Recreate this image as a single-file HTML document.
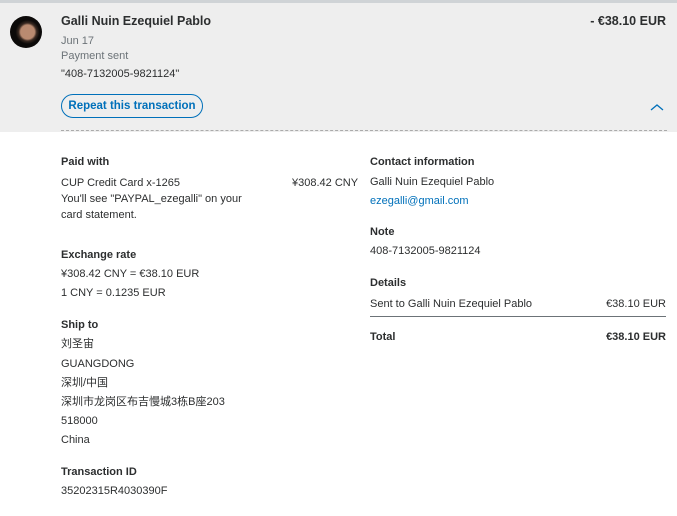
<!DOCTYPE html>
<html><head><meta charset="utf-8"><style>
*{margin:0;padding:0;box-sizing:border-box}
body{width:677px;height:516px;background:#fff;font-family:"Liberation Sans","Noto Sans CJK SC",sans-serif;color:#2c2e2f;font-size:11px;position:relative;overflow:hidden}
.hdr{position:absolute;left:0;top:0;width:677px;height:132px;background:#eeeeee;border-top:3px solid #cfd3d6}
.a{position:absolute;white-space:nowrap;line-height:14px}
.b{font-weight:bold}
.g{color:#6c7378}
.av{position:absolute;left:10px;top:16px;width:32px;height:32px;border-radius:50%;background:radial-gradient(circle at 55% 50%,#b98a70 0 7px,#3a2a22 9px,#0c0a09 12px)}
.btn{position:absolute;left:61px;top:94px;width:142px;height:24px;border:1px solid #0070ba;border-radius:12px;color:#0070ba;font-weight:bold;font-size:11.5px;line-height:22px;text-align:center}
.dot{position:absolute;left:61px;top:130px;width:606px;border-top:1px dashed #aaa}
</style></head><body>
<div class="hdr"></div>
<div class="av"></div>
<div class="a b" style="left:61px;top:14px;font-size:12.5px">Galli Nuin Ezequiel Pablo</div>
<div class="a g" style="left:61px;top:34px">Jun 17</div>
<div class="a g" style="left:61px;top:49px">Payment sent</div>
<div class="a" style="left:61px;top:67px">"408-7132005-9821124"</div>
<div class="btn">Repeat this transaction</div>
<div class="a b" style="right:11px;top:14px;font-size:12.5px">- €38.10 EUR</div>
<svg class="a" style="left:650px;top:104px" width="14" height="8"><path d="M1 6 L7 1 L13 6" stroke="#0070ba" stroke-width="1.3" fill="none"/></svg>
<div class="dot"></div>

<div class="a b" style="left:61px;top:155px">Paid with</div>
<div class="a" style="left:61px;top:176px">CUP Credit Card x-1265</div>
<div class="a" style="left:292px;top:176px">¥308.42 CNY</div>
<div class="a" style="left:61px;top:192px">You'll see "PAYPAL_ezegalli" on your</div>
<div class="a" style="left:61px;top:208px">card statement.</div>
<div class="a b" style="left:61px;top:248px">Exchange rate</div>
<div class="a" style="left:61px;top:267px">¥308.42 CNY = €38.10 EUR</div>
<div class="a" style="left:61px;top:286px">1 CNY = 0.1235 EUR</div>
<div class="a b" style="left:61px;top:318px">Ship to</div>
<div class="a" style="left:61px;top:337px">刘圣宙</div>
<div class="a" style="left:61px;top:357px">GUANGDONG</div>
<div class="a" style="left:61px;top:376px">深圳/中国</div>
<div class="a" style="left:61px;top:395px">深圳市龙岗区布吉慢城3栋B座203</div>
<div class="a" style="left:61px;top:414px">518000</div>
<div class="a" style="left:61px;top:433px">China</div>
<div class="a b" style="left:61px;top:465px">Transaction ID</div>
<div class="a" style="left:61px;top:484px">35202315R4030390F</div>

<div class="a b" style="left:370px;top:155px">Contact information</div>
<div class="a" style="left:370px;top:175px">Galli Nuin Ezequiel Pablo</div>
<div class="a" style="left:370px;top:194px;color:#0070ba">ezegalli@gmail.com</div>
<div class="a b" style="left:370px;top:225px">Note</div>
<div class="a" style="left:370px;top:244px">408-7132005-9821124</div>
<div class="a b" style="left:370px;top:276px">Details</div>
<div class="a" style="left:370px;top:297px">Sent to Galli Nuin Ezequiel Pablo</div>
<div class="a" style="right:11px;top:297px">€38.10 EUR</div>
<div class="a" style="left:370px;top:316px;width:296px;border-top:1px solid #6c7378"></div>
<div class="a b" style="left:370px;top:330px">Total</div>
<div class="a b" style="right:11px;top:330px">€38.10 EUR</div>
</body></html>
